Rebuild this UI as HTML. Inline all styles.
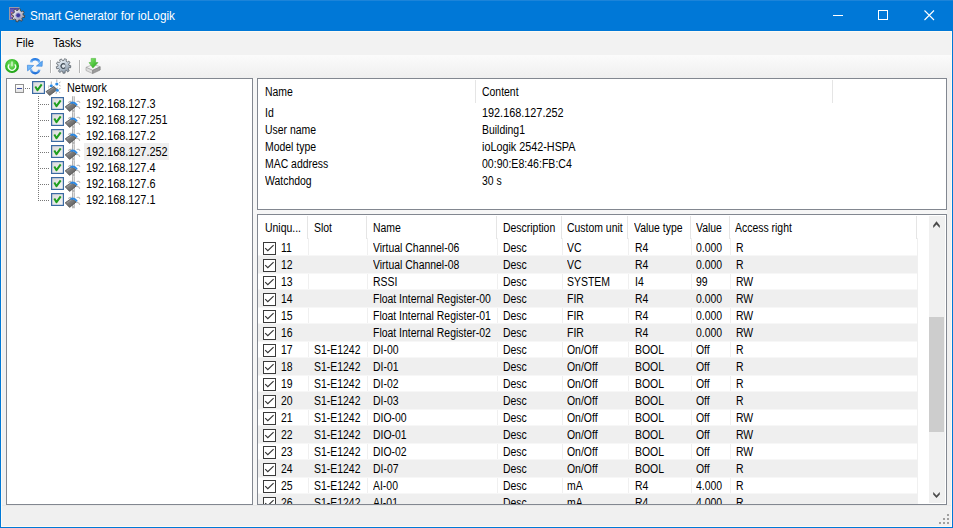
<!DOCTYPE html>
<html><head><meta charset="utf-8"><style>
*{margin:0;padding:0;box-sizing:border-box}
html,body{width:953px;height:528px;overflow:hidden;background:#0078d7;font-family:"Liberation Sans",sans-serif;position:relative}
div{position:absolute}
.t{white-space:pre;color:#000;line-height:13px;transform-origin:0 0}
.lt{font-size:12px;transform:scaleX(.87)}
.tt{font-size:12px;transform:scaleX(.905)}
#topline{left:0;top:0;width:953px;height:1px;background:#1c84d9}
#title{left:30px;top:9px;font-size:12.3px;color:#fff;line-height:15px;white-space:pre;transform:scaleX(.955);transform-origin:0 0}
#client{left:1px;top:31px;width:951px;height:496px;background:#f0f0f0;border:1px solid #fdfaf3}
#menu{left:0;top:0}
.menuitem{font-size:12.2px;white-space:pre;line-height:14px;transform:scaleX(.91);transform-origin:0 0}
#toolbar{left:1px;top:55px;width:950px;height:23px;background:linear-gradient(#fbfbfb,#efefef)}
.tsep{top:60px;width:2px;height:13px;border-left:1px solid #b4b4b4;border-right:1px solid #fff}
.panel{background:#fff;border:1px solid #828790}
.hsep{top:216px;width:1px;height:23px;background:#e5e5e5}
.hsep2{top:80px;width:1px;height:23px;background:#e5e5e5}
.grow{left:258px;width:659px;height:19px;background:#efefef;border-top:1px solid #f7f7f7;border-bottom:1px solid #f7f7f7}
.cb{position:absolute}
.tcb{width:13px;height:13px;border:1px solid #3c6aa5;background:linear-gradient(135deg,#e0e0e0,#f8f8f8)}
.tcb svg{position:absolute;left:0;top:0}
.sel{left:84px;width:85px;height:17px;background:#efefef}
.hdots{height:1px;background:repeating-linear-gradient(90deg,#777 0 1px,transparent 1px 2px)}
.vdots{width:1px;background:repeating-linear-gradient(180deg,#777 0 1px,transparent 1px 2px)}
.nic{width:16px;height:16px}
#sb{left:929px;top:216px;width:16px;height:287px;background:#f0f0f0}
#thumb{left:929px;top:317px;width:15px;height:115px;background:#cdcdcd}
</style></head><body>
<div id="topline"></div>
<svg style="position:absolute;left:8px;top:6px" width="19" height="18" viewBox="0 0 19 18"><defs><linearGradient id="ag" x1="0" y1="0" x2="1" y2="1"><stop offset="0" stop-color="#f4f4fa"/><stop offset="0.5" stop-color="#c8cad8"/><stop offset="1" stop-color="#70768e"/></linearGradient></defs><rect x="1.5" y="1.5" width="9.5" height="12" fill="#6a5ec0" stroke="#9a98a8" stroke-width="1"/><rect x="2" y="2" width="8.5" height="1.3" fill="#4a4aa8"/><circle cx="4" cy="7" r="1" fill="#f07a80"/><circle cx="4" cy="10" r="1" fill="#e8a0a0"/><polygon points="15.20,9.12 16.79,9.58 16.38,11.61 14.73,11.41 13.86,12.71 14.66,14.16 12.94,15.30 11.91,14.00 10.38,14.30 9.92,15.89 7.89,15.48 8.09,13.83 6.79,12.96 5.34,13.76 4.20,12.04 5.50,11.01 5.20,9.48 3.61,9.02 4.02,6.99 5.67,7.19 6.54,5.89 5.74,4.44 7.46,3.30 8.49,4.60 10.02,4.30 10.48,2.71 12.51,3.12 12.31,4.77 13.61,5.64 15.06,4.84 16.20,6.56 14.90,7.59" fill="url(#ag)" stroke="#3a3a3a" stroke-width="0.8"/><circle cx="10.2" cy="9.3" r="2.4" fill="#3e3aa0" stroke="#a0a0d0" stroke-width="0.8"/></svg>
<div id="title">Smart Generator for ioLogik</div>
<svg style="position:absolute;left:833px;top:15px" width="10" height="1"><rect width="10" height="1" fill="#fff"/></svg>
<svg style="position:absolute;left:878px;top:10px" width="10" height="10"><rect x="0.5" y="0.5" width="9" height="9" fill="none" stroke="#fff"/></svg>
<svg style="position:absolute;left:924px;top:10px" width="11" height="11"><path d="M0.5 0.5 L10 10 M10 0.5 L0.5 10" stroke="#fff" stroke-width="1.1"/></svg>
<div id="client"></div>
<div style="left:2px;top:32px;width:949px;height:23px;background:#f2f2f2"></div>
<div class="t menuitem" style="left:16px;top:36px">File</div>
<div class="t menuitem" style="left:53px;top:36px">Tasks</div>
<div id="toolbar"></div>
<!-- toolbar icons -->
<svg style="position:absolute;left:5px;top:59px" width="14" height="14" viewBox="0 0 14 14"><defs><radialGradient id="gp" cx="45%" cy="40%" r="60%"><stop offset="0" stop-color="#8ce878"/><stop offset="0.65" stop-color="#3cbf2e"/><stop offset="1" stop-color="#199c12"/></radialGradient></defs><circle cx="7" cy="7" r="7" fill="url(#gp)"/><path d="M4.2 5.3 A3.6 3.6 0 1 0 9.8 5.3" stroke="#f2fff0" stroke-width="1.35" fill="none"/><path d="M7 2.6 V7.2" stroke="#d8f5d0" stroke-width="1.4"/></svg>
<svg style="position:absolute;left:24px;top:55px" width="24" height="22" viewBox="0 0 24 22"><defs><linearGradient id="gr" x1="0" y1="0" x2="0" y2="1"><stop offset="0" stop-color="#2a7ee4"/><stop offset="1" stop-color="#a6d6ff"/></linearGradient><linearGradient id="gr2" x1="0" y1="1" x2="0" y2="0"><stop offset="0" stop-color="#1f70d8"/><stop offset="1" stop-color="#9ccfff"/></linearGradient></defs><path d="M7.05 7.5 A4.3 4.3 0 0 1 15.5 8.2" stroke="url(#gr)" stroke-width="2.5" fill="none"/><polygon points="18.4,6 18.1,11.3 12.4,11.1" fill="#62acf6" stroke="#2f7ed8" stroke-width="0.6" stroke-linejoin="round"/><path d="M15.35 14.6 A4.2 4.2 0 0 1 7.0 13.2" stroke="url(#gr2)" stroke-width="2.5" fill="none"/><polygon points="3.4,10.2 9.7,10.5 3.6,15.9" fill="#72b8fa" stroke="#2f7ed8" stroke-width="0.6" stroke-linejoin="round"/></svg>
<div class="tsep" style="left:50px"></div>
<svg style="position:absolute;left:52px;top:55px" width="24" height="22" viewBox="0 0 24 22"><defs><linearGradient id="gg" x1="0.2" y1="0" x2="0.8" y2="1"><stop offset="0" stop-color="#f8fbfd"/><stop offset="0.45" stop-color="#c4d0dc"/><stop offset="1" stop-color="#7c8c9c"/></linearGradient></defs><polygon points="16.97,10.40 18.79,10.66 18.58,12.78 16.74,12.67 16.07,14.05 17.30,15.43 15.78,16.92 14.44,15.65 13.04,16.28 13.10,18.12 10.97,18.28 10.76,16.45 9.29,16.04 8.15,17.49 6.42,16.24 7.43,14.70 6.57,13.43 4.76,13.81 4.24,11.75 6.00,11.22 6.16,9.69 4.53,8.83 5.46,6.90 7.15,7.63 8.25,6.57 7.56,4.85 9.50,3.98 10.33,5.63 11.86,5.51 12.43,3.76 14.48,4.34 14.06,6.13 15.30,7.03 16.87,6.05 18.07,7.81 16.59,8.92" fill="url(#gg)" stroke="#5a626a" stroke-width="0.8"/><circle cx="11.5" cy="11" r="2.3" fill="#dde4ea" stroke="#8e9aa6" stroke-width="0.9"/><path d="M12.8 9.3 A2.3 2.3 0 1 0 13.1 12.6" stroke="#46505a" stroke-width="1.1" fill="none"/></svg>
<div class="tsep" style="left:79px"></div>
<svg style="position:absolute;left:82px;top:55px" width="24" height="22" viewBox="0 0 24 22"><defs><linearGradient id="dg" x1="0" y1="0" x2="1" y2="1"><stop offset="0" stop-color="#8af070"/><stop offset="1" stop-color="#22a016"/></linearGradient></defs><polygon points="4,12.3 11.5,9.3 18.2,11.8 10.6,15.3" fill="#f2f2f2" stroke="#9a9a9a" stroke-width="0.6"/><polygon points="4,12.3 10.6,15.3 10.6,18.6 4,15.5" fill="#dedede" stroke="#9a9a9a" stroke-width="0.6"/><polygon points="10.6,15.3 18.2,11.8 18.2,15 10.6,18.6" fill="#9c9c9c" stroke="#7a7a7a" stroke-width="0.6"/><polygon points="9.2,3.4 13.6,3.4 13.6,7.4 16,7.6 10.9,13 7,7.6 9.2,7.4" fill="url(#dg)" stroke="#3aa82a" stroke-width="0.5"/></svg>

<div style="left:253px;top:78px;width:4px;height:427px;background:#f6f6f6"></div>
<div style="left:257px;top:210px;width:690px;height:4px;background:#f6f6f6"></div>
<!-- tree panel -->
<div class="panel" style="left:6px;top:78px;width:247px;height:427px"></div>
<div style="left:15px;top:84px;width:9px;height:9px;border:1px solid #919191;background:linear-gradient(#fff,#e4e4e4)"></div>
<div style="left:17px;top:88px;width:5px;height:1px;background:#3c4ea0"></div>
<div class="hdots" style="left:25px;top:88px;width:6px"></div>
<svg class="cb" style="left:32px;top:81px" width="13" height="13"><defs><linearGradient id="tg" x1="0" y1="0" x2="1" y2="1"><stop offset="0" stop-color="#d8d8d8"/><stop offset="1" stop-color="#f8f8f8"/></linearGradient></defs><rect x="0.6" y="0.6" width="11.8" height="11.8" fill="url(#tg)" stroke="#3a6aa3" stroke-width="1.2"/><path d="M3.3 5.6 L5.5 9.2 L9.7 3.4" stroke="#1f9e1f" stroke-width="2" fill="none" stroke-linejoin="round"/></svg>
<svg style="position:absolute;left:45px;top:79px" width="18" height="18" viewBox="0 0 18 18"><path d="M6.3 2.5 V5 M11.8 0.5 V3 M12.3 8.5 V9.5 M3 7 L4.8 7.3 M8 8 L9.5 7 M14 4 L15.5 3 M14 6 L15.5 7 M14 10 L15.5 9.5 M14 12.5 L15 14 M11.5 13 L11 15 M3 9 L4 8.5" stroke="#a8a8a8" stroke-width="0.9" fill="none"/><polygon points="1,12.6 8.6,7.6 12.4,10.6 4.6,16.4" fill="url(#bg2)" stroke="#505050" stroke-width="0.8" stroke-linejoin="round"/><path d="M2.4 12.8 L8.6 8.8" stroke="#9a9a9a" stroke-width="0.8"/><circle cx="6.3" cy="6.8" r="1.5" fill="#2a8ae6"/><circle cx="11.8" cy="5" r="1.6" fill="#2a8ae6"/><circle cx="12.3" cy="11.3" r="1.5" fill="#2a8ae6"/></svg>
<div class="t tt" style="left:67px;top:82px">Network</div>
<div class="vdots" style="left:38px;top:96px;height:105px"></div>
<div class="hdots" style="left:40px;top:104px;width:10px"></div>
<svg class="cb" style="left:51px;top:97px" width="13" height="13"><defs><linearGradient id="tg" x1="0" y1="0" x2="1" y2="1"><stop offset="0" stop-color="#d8d8d8"/><stop offset="1" stop-color="#f8f8f8"/></linearGradient></defs><rect x="0.6" y="0.6" width="11.8" height="11.8" fill="url(#tg)" stroke="#3a6aa3" stroke-width="1.2"/><path d="M3.3 5.6 L5.5 9.2 L9.7 3.4" stroke="#1f9e1f" stroke-width="2" fill="none" stroke-linejoin="round"/></svg>
<div class="nic" style="left:65px;top:96px;height:18px"><svg width="16" height="18" viewBox="0 0 16 18"><defs><linearGradient id="cg" x1="0" y1="0" x2="1" y2="0"><stop offset="0" stop-color="#979797"/><stop offset="0.5" stop-color="#e4e4e4"/><stop offset="1" stop-color="#aaaaaa"/></linearGradient><linearGradient id="bg2" x1="0" y1="0" x2="1" y2="1"><stop offset="0" stop-color="#9a9a9a"/><stop offset="1" stop-color="#545454"/></linearGradient></defs><rect x="7" y="0" width="2.9" height="16.5" rx="1" fill="url(#cg)"/><path d="M3.4 6.8 Q4.4 5 6.4 5.4 M11.6 5.6 Q14 4.4 15 6.8 M11.4 10.6 Q14.2 10 14.8 12.8 M8.4 14.2 L8.8 16" stroke="#b4b4b4" stroke-width="1.1" fill="none"/><polygon points="0.2,10.8 6.4,6.4 11.2,10 4.6,15.4" fill="url(#bg2)" stroke="#505050" stroke-width="0.8" stroke-linejoin="round"/><path d="M2 10.8 L6.6 7.8" stroke="#9a9a9a" stroke-width="0.8"/><path d="M6.3 6.8 Q9.2 5.6 11.6 8.8" stroke="#2a88e4" stroke-width="1.9" fill="none" stroke-linecap="round"/></svg></div>
<div class="t tt" style="left:86px;top:98px">192.168.127.3</div>
<div class="hdots" style="left:40px;top:120px;width:10px"></div>
<svg class="cb" style="left:51px;top:113px" width="13" height="13"><defs><linearGradient id="tg" x1="0" y1="0" x2="1" y2="1"><stop offset="0" stop-color="#d8d8d8"/><stop offset="1" stop-color="#f8f8f8"/></linearGradient></defs><rect x="0.6" y="0.6" width="11.8" height="11.8" fill="url(#tg)" stroke="#3a6aa3" stroke-width="1.2"/><path d="M3.3 5.6 L5.5 9.2 L9.7 3.4" stroke="#1f9e1f" stroke-width="2" fill="none" stroke-linejoin="round"/></svg>
<div class="nic" style="left:65px;top:112px;height:18px"><svg width="16" height="18" viewBox="0 0 16 18"><defs><linearGradient id="cg" x1="0" y1="0" x2="1" y2="0"><stop offset="0" stop-color="#979797"/><stop offset="0.5" stop-color="#e4e4e4"/><stop offset="1" stop-color="#aaaaaa"/></linearGradient><linearGradient id="bg2" x1="0" y1="0" x2="1" y2="1"><stop offset="0" stop-color="#9a9a9a"/><stop offset="1" stop-color="#545454"/></linearGradient></defs><rect x="7" y="0" width="2.9" height="16.5" rx="1" fill="url(#cg)"/><path d="M3.4 6.8 Q4.4 5 6.4 5.4 M11.6 5.6 Q14 4.4 15 6.8 M11.4 10.6 Q14.2 10 14.8 12.8 M8.4 14.2 L8.8 16" stroke="#b4b4b4" stroke-width="1.1" fill="none"/><polygon points="0.2,10.8 6.4,6.4 11.2,10 4.6,15.4" fill="url(#bg2)" stroke="#505050" stroke-width="0.8" stroke-linejoin="round"/><path d="M2 10.8 L6.6 7.8" stroke="#9a9a9a" stroke-width="0.8"/><path d="M6.3 6.8 Q9.2 5.6 11.6 8.8" stroke="#2a88e4" stroke-width="1.9" fill="none" stroke-linecap="round"/></svg></div>
<div class="t tt" style="left:86px;top:114px">192.168.127.251</div>
<div class="hdots" style="left:40px;top:136px;width:10px"></div>
<svg class="cb" style="left:51px;top:129px" width="13" height="13"><defs><linearGradient id="tg" x1="0" y1="0" x2="1" y2="1"><stop offset="0" stop-color="#d8d8d8"/><stop offset="1" stop-color="#f8f8f8"/></linearGradient></defs><rect x="0.6" y="0.6" width="11.8" height="11.8" fill="url(#tg)" stroke="#3a6aa3" stroke-width="1.2"/><path d="M3.3 5.6 L5.5 9.2 L9.7 3.4" stroke="#1f9e1f" stroke-width="2" fill="none" stroke-linejoin="round"/></svg>
<div class="nic" style="left:65px;top:128px;height:18px"><svg width="16" height="18" viewBox="0 0 16 18"><defs><linearGradient id="cg" x1="0" y1="0" x2="1" y2="0"><stop offset="0" stop-color="#979797"/><stop offset="0.5" stop-color="#e4e4e4"/><stop offset="1" stop-color="#aaaaaa"/></linearGradient><linearGradient id="bg2" x1="0" y1="0" x2="1" y2="1"><stop offset="0" stop-color="#9a9a9a"/><stop offset="1" stop-color="#545454"/></linearGradient></defs><rect x="7" y="0" width="2.9" height="16.5" rx="1" fill="url(#cg)"/><path d="M3.4 6.8 Q4.4 5 6.4 5.4 M11.6 5.6 Q14 4.4 15 6.8 M11.4 10.6 Q14.2 10 14.8 12.8 M8.4 14.2 L8.8 16" stroke="#b4b4b4" stroke-width="1.1" fill="none"/><polygon points="0.2,10.8 6.4,6.4 11.2,10 4.6,15.4" fill="url(#bg2)" stroke="#505050" stroke-width="0.8" stroke-linejoin="round"/><path d="M2 10.8 L6.6 7.8" stroke="#9a9a9a" stroke-width="0.8"/><path d="M6.3 6.8 Q9.2 5.6 11.6 8.8" stroke="#2a88e4" stroke-width="1.9" fill="none" stroke-linecap="round"/></svg></div>
<div class="t tt" style="left:86px;top:130px">192.168.127.2</div>
<div class="sel" style="top:143px"></div>
<div class="hdots" style="left:40px;top:152px;width:10px"></div>
<svg class="cb" style="left:51px;top:145px" width="13" height="13"><defs><linearGradient id="tg" x1="0" y1="0" x2="1" y2="1"><stop offset="0" stop-color="#d8d8d8"/><stop offset="1" stop-color="#f8f8f8"/></linearGradient></defs><rect x="0.6" y="0.6" width="11.8" height="11.8" fill="url(#tg)" stroke="#3a6aa3" stroke-width="1.2"/><path d="M3.3 5.6 L5.5 9.2 L9.7 3.4" stroke="#1f9e1f" stroke-width="2" fill="none" stroke-linejoin="round"/></svg>
<div class="nic" style="left:65px;top:144px;height:18px"><svg width="16" height="18" viewBox="0 0 16 18"><defs><linearGradient id="cg" x1="0" y1="0" x2="1" y2="0"><stop offset="0" stop-color="#979797"/><stop offset="0.5" stop-color="#e4e4e4"/><stop offset="1" stop-color="#aaaaaa"/></linearGradient><linearGradient id="bg2" x1="0" y1="0" x2="1" y2="1"><stop offset="0" stop-color="#9a9a9a"/><stop offset="1" stop-color="#545454"/></linearGradient></defs><rect x="7" y="0" width="2.9" height="16.5" rx="1" fill="url(#cg)"/><path d="M3.4 6.8 Q4.4 5 6.4 5.4 M11.6 5.6 Q14 4.4 15 6.8 M11.4 10.6 Q14.2 10 14.8 12.8 M8.4 14.2 L8.8 16" stroke="#b4b4b4" stroke-width="1.1" fill="none"/><polygon points="0.2,10.8 6.4,6.4 11.2,10 4.6,15.4" fill="url(#bg2)" stroke="#505050" stroke-width="0.8" stroke-linejoin="round"/><path d="M2 10.8 L6.6 7.8" stroke="#9a9a9a" stroke-width="0.8"/><path d="M6.3 6.8 Q9.2 5.6 11.6 8.8" stroke="#2a88e4" stroke-width="1.9" fill="none" stroke-linecap="round"/></svg></div>
<div class="t tt" style="left:86px;top:146px">192.168.127.252</div>
<div class="hdots" style="left:40px;top:168px;width:10px"></div>
<svg class="cb" style="left:51px;top:161px" width="13" height="13"><defs><linearGradient id="tg" x1="0" y1="0" x2="1" y2="1"><stop offset="0" stop-color="#d8d8d8"/><stop offset="1" stop-color="#f8f8f8"/></linearGradient></defs><rect x="0.6" y="0.6" width="11.8" height="11.8" fill="url(#tg)" stroke="#3a6aa3" stroke-width="1.2"/><path d="M3.3 5.6 L5.5 9.2 L9.7 3.4" stroke="#1f9e1f" stroke-width="2" fill="none" stroke-linejoin="round"/></svg>
<div class="nic" style="left:65px;top:160px;height:18px"><svg width="16" height="18" viewBox="0 0 16 18"><defs><linearGradient id="cg" x1="0" y1="0" x2="1" y2="0"><stop offset="0" stop-color="#979797"/><stop offset="0.5" stop-color="#e4e4e4"/><stop offset="1" stop-color="#aaaaaa"/></linearGradient><linearGradient id="bg2" x1="0" y1="0" x2="1" y2="1"><stop offset="0" stop-color="#9a9a9a"/><stop offset="1" stop-color="#545454"/></linearGradient></defs><rect x="7" y="0" width="2.9" height="16.5" rx="1" fill="url(#cg)"/><path d="M3.4 6.8 Q4.4 5 6.4 5.4 M11.6 5.6 Q14 4.4 15 6.8 M11.4 10.6 Q14.2 10 14.8 12.8 M8.4 14.2 L8.8 16" stroke="#b4b4b4" stroke-width="1.1" fill="none"/><polygon points="0.2,10.8 6.4,6.4 11.2,10 4.6,15.4" fill="url(#bg2)" stroke="#505050" stroke-width="0.8" stroke-linejoin="round"/><path d="M2 10.8 L6.6 7.8" stroke="#9a9a9a" stroke-width="0.8"/><path d="M6.3 6.8 Q9.2 5.6 11.6 8.8" stroke="#2a88e4" stroke-width="1.9" fill="none" stroke-linecap="round"/></svg></div>
<div class="t tt" style="left:86px;top:162px">192.168.127.4</div>
<div class="hdots" style="left:40px;top:184px;width:10px"></div>
<svg class="cb" style="left:51px;top:177px" width="13" height="13"><defs><linearGradient id="tg" x1="0" y1="0" x2="1" y2="1"><stop offset="0" stop-color="#d8d8d8"/><stop offset="1" stop-color="#f8f8f8"/></linearGradient></defs><rect x="0.6" y="0.6" width="11.8" height="11.8" fill="url(#tg)" stroke="#3a6aa3" stroke-width="1.2"/><path d="M3.3 5.6 L5.5 9.2 L9.7 3.4" stroke="#1f9e1f" stroke-width="2" fill="none" stroke-linejoin="round"/></svg>
<div class="nic" style="left:65px;top:176px;height:18px"><svg width="16" height="18" viewBox="0 0 16 18"><defs><linearGradient id="cg" x1="0" y1="0" x2="1" y2="0"><stop offset="0" stop-color="#979797"/><stop offset="0.5" stop-color="#e4e4e4"/><stop offset="1" stop-color="#aaaaaa"/></linearGradient><linearGradient id="bg2" x1="0" y1="0" x2="1" y2="1"><stop offset="0" stop-color="#9a9a9a"/><stop offset="1" stop-color="#545454"/></linearGradient></defs><rect x="7" y="0" width="2.9" height="16.5" rx="1" fill="url(#cg)"/><path d="M3.4 6.8 Q4.4 5 6.4 5.4 M11.6 5.6 Q14 4.4 15 6.8 M11.4 10.6 Q14.2 10 14.8 12.8 M8.4 14.2 L8.8 16" stroke="#b4b4b4" stroke-width="1.1" fill="none"/><polygon points="0.2,10.8 6.4,6.4 11.2,10 4.6,15.4" fill="url(#bg2)" stroke="#505050" stroke-width="0.8" stroke-linejoin="round"/><path d="M2 10.8 L6.6 7.8" stroke="#9a9a9a" stroke-width="0.8"/><path d="M6.3 6.8 Q9.2 5.6 11.6 8.8" stroke="#2a88e4" stroke-width="1.9" fill="none" stroke-linecap="round"/></svg></div>
<div class="t tt" style="left:86px;top:178px">192.168.127.6</div>
<div class="hdots" style="left:40px;top:200px;width:10px"></div>
<svg class="cb" style="left:51px;top:193px" width="13" height="13"><defs><linearGradient id="tg" x1="0" y1="0" x2="1" y2="1"><stop offset="0" stop-color="#d8d8d8"/><stop offset="1" stop-color="#f8f8f8"/></linearGradient></defs><rect x="0.6" y="0.6" width="11.8" height="11.8" fill="url(#tg)" stroke="#3a6aa3" stroke-width="1.2"/><path d="M3.3 5.6 L5.5 9.2 L9.7 3.4" stroke="#1f9e1f" stroke-width="2" fill="none" stroke-linejoin="round"/></svg>
<div class="nic" style="left:65px;top:192px;height:18px"><svg width="16" height="18" viewBox="0 0 16 18"><defs><linearGradient id="cg" x1="0" y1="0" x2="1" y2="0"><stop offset="0" stop-color="#979797"/><stop offset="0.5" stop-color="#e4e4e4"/><stop offset="1" stop-color="#aaaaaa"/></linearGradient><linearGradient id="bg2" x1="0" y1="0" x2="1" y2="1"><stop offset="0" stop-color="#9a9a9a"/><stop offset="1" stop-color="#545454"/></linearGradient></defs><rect x="7" y="0" width="2.9" height="16.5" rx="1" fill="url(#cg)"/><path d="M3.4 6.8 Q4.4 5 6.4 5.4 M11.6 5.6 Q14 4.4 15 6.8 M11.4 10.6 Q14.2 10 14.8 12.8 M8.4 14.2 L8.8 16" stroke="#b4b4b4" stroke-width="1.1" fill="none"/><polygon points="0.2,10.8 6.4,6.4 11.2,10 4.6,15.4" fill="url(#bg2)" stroke="#505050" stroke-width="0.8" stroke-linejoin="round"/><path d="M2 10.8 L6.6 7.8" stroke="#9a9a9a" stroke-width="0.8"/><path d="M6.3 6.8 Q9.2 5.6 11.6 8.8" stroke="#2a88e4" stroke-width="1.9" fill="none" stroke-linecap="round"/></svg></div>
<div class="t tt" style="left:86px;top:194px">192.168.127.1</div>

<!-- info panel -->
<div class="panel" style="left:257px;top:78px;width:690px;height:132px"></div>
<div class="t lt" style="left:265px;top:86px">Name</div>
<div class="t lt" style="left:482px;top:86px">Content</div>
<div class="hsep2" style="left:475px"></div>
<div class="hsep2" style="left:832px"></div>
<div class="t lt" style="left:265px;top:107px">Id</div>
<div class="t lt" style="left:482px;top:107px;transform:scaleX(0.905)">192.168.127.252</div>
<div class="t lt" style="left:265px;top:124px">User name</div>
<div class="t lt" style="left:482px;top:124px">Building1</div>
<div class="t lt" style="left:265px;top:141px">Model type</div>
<div class="t lt" style="left:482px;top:141px;transform:scaleX(0.9)">ioLogik 2542-HSPA</div>
<div class="t lt" style="left:265px;top:158px">MAC address</div>
<div class="t lt" style="left:482px;top:158px;transform:scaleX(0.88)">00:90:E8:46:FB:C4</div>
<div class="t lt" style="left:265px;top:175px">Watchdog</div>
<div class="t lt" style="left:482px;top:175px">30 s</div>

<!-- list -->
<div class="panel" style="left:257px;top:214px;width:690px;height:291px"></div>
<div style="left:258px;top:214px;width:671px;height:290px;overflow:hidden"><div style="left:-258px;top:-214px;width:953px;height:528px">
<div class="t lt" style="left:265px;top:222px">Uniqu...</div>
<div class="t lt" style="left:314px;top:222px">Slot</div>
<div class="t lt" style="left:373px;top:222px">Name</div>
<div class="t lt" style="left:503px;top:222px">Description</div>
<div class="t lt" style="left:567px;top:222px">Custom unit</div>
<div class="t lt" style="left:634px;top:222px">Value type</div>
<div class="t lt" style="left:696px;top:222px">Value</div>
<div class="t lt" style="left:735px;top:222px">Access right</div>
<div class="hsep" style="left:307px"></div>
<div class="hsep" style="left:366px"></div>
<div class="hsep" style="left:496px"></div>
<div class="hsep" style="left:561px"></div>
<div class="hsep" style="left:627px"></div>
<div class="hsep" style="left:690px"></div>
<div class="hsep" style="left:729px"></div>
<div class="hsep" style="left:916px"></div>
<div style="left:308px;top:238px;width:1px;height:266px;background:#f0f0f0"></div>
<div style="left:367px;top:238px;width:1px;height:266px;background:#f0f0f0"></div>
<div style="left:497px;top:238px;width:1px;height:266px;background:#f0f0f0"></div>
<div style="left:562px;top:238px;width:1px;height:266px;background:#f0f0f0"></div>
<div style="left:628px;top:238px;width:1px;height:266px;background:#f0f0f0"></div>
<div style="left:691px;top:238px;width:1px;height:266px;background:#f0f0f0"></div>
<div style="left:730px;top:238px;width:1px;height:266px;background:#f0f0f0"></div>
<div style="left:917px;top:238px;width:1px;height:266px;background:#f0f0f0"></div>
<svg class="cb" style="left:263px;top:242px" width="13" height="13" viewBox="0 0 13 13"><rect x="0.5" y="0.5" width="12" height="12" fill="#fff" stroke="#3a3a3a"/><path d="M2.2 6.1 L4.8 8.6 L10.6 3.1" stroke="#333" stroke-width="1.15" fill="none"/></svg>
<div class="t lt" style="left:281px;top:242px">11</div>
<div class="t lt" style="left:373px;top:242px">Virtual Channel-06</div>
<div class="t lt" style="left:503px;top:242px">Desc</div>
<div class="t lt" style="left:567px;top:242px">VC</div>
<div class="t lt" style="left:635px;top:242px">R4</div>
<div class="t lt" style="left:696px;top:242px">0.000</div>
<div class="t lt" style="left:736px;top:242px">R</div>
<div class="grow" style="top:255px"></div>
<svg class="cb" style="left:263px;top:259px" width="13" height="13" viewBox="0 0 13 13"><rect x="0.5" y="0.5" width="12" height="12" fill="#fff" stroke="#3a3a3a"/><path d="M2.2 6.1 L4.8 8.6 L10.6 3.1" stroke="#333" stroke-width="1.15" fill="none"/></svg>
<div class="t lt" style="left:281px;top:259px">12</div>
<div class="t lt" style="left:373px;top:259px">Virtual Channel-08</div>
<div class="t lt" style="left:503px;top:259px">Desc</div>
<div class="t lt" style="left:567px;top:259px">VC</div>
<div class="t lt" style="left:635px;top:259px">R4</div>
<div class="t lt" style="left:696px;top:259px">0.000</div>
<div class="t lt" style="left:736px;top:259px">R</div>
<svg class="cb" style="left:263px;top:276px" width="13" height="13" viewBox="0 0 13 13"><rect x="0.5" y="0.5" width="12" height="12" fill="#fff" stroke="#3a3a3a"/><path d="M2.2 6.1 L4.8 8.6 L10.6 3.1" stroke="#333" stroke-width="1.15" fill="none"/></svg>
<div class="t lt" style="left:281px;top:276px">13</div>
<div class="t lt" style="left:373px;top:276px">RSSI</div>
<div class="t lt" style="left:503px;top:276px">Desc</div>
<div class="t lt" style="left:567px;top:276px">SYSTEM</div>
<div class="t lt" style="left:635px;top:276px">I4</div>
<div class="t lt" style="left:696px;top:276px">99</div>
<div class="t lt" style="left:736px;top:276px">RW</div>
<div class="grow" style="top:289px"></div>
<svg class="cb" style="left:263px;top:293px" width="13" height="13" viewBox="0 0 13 13"><rect x="0.5" y="0.5" width="12" height="12" fill="#fff" stroke="#3a3a3a"/><path d="M2.2 6.1 L4.8 8.6 L10.6 3.1" stroke="#333" stroke-width="1.15" fill="none"/></svg>
<div class="t lt" style="left:281px;top:293px">14</div>
<div class="t lt" style="left:373px;top:293px">Float Internal Register-00</div>
<div class="t lt" style="left:503px;top:293px">Desc</div>
<div class="t lt" style="left:567px;top:293px">FIR</div>
<div class="t lt" style="left:635px;top:293px">R4</div>
<div class="t lt" style="left:696px;top:293px">0.000</div>
<div class="t lt" style="left:736px;top:293px">RW</div>
<svg class="cb" style="left:263px;top:310px" width="13" height="13" viewBox="0 0 13 13"><rect x="0.5" y="0.5" width="12" height="12" fill="#fff" stroke="#3a3a3a"/><path d="M2.2 6.1 L4.8 8.6 L10.6 3.1" stroke="#333" stroke-width="1.15" fill="none"/></svg>
<div class="t lt" style="left:281px;top:310px">15</div>
<div class="t lt" style="left:373px;top:310px">Float Internal Register-01</div>
<div class="t lt" style="left:503px;top:310px">Desc</div>
<div class="t lt" style="left:567px;top:310px">FIR</div>
<div class="t lt" style="left:635px;top:310px">R4</div>
<div class="t lt" style="left:696px;top:310px">0.000</div>
<div class="t lt" style="left:736px;top:310px">RW</div>
<div class="grow" style="top:323px"></div>
<svg class="cb" style="left:263px;top:327px" width="13" height="13" viewBox="0 0 13 13"><rect x="0.5" y="0.5" width="12" height="12" fill="#fff" stroke="#3a3a3a"/><path d="M2.2 6.1 L4.8 8.6 L10.6 3.1" stroke="#333" stroke-width="1.15" fill="none"/></svg>
<div class="t lt" style="left:281px;top:327px">16</div>
<div class="t lt" style="left:373px;top:327px">Float Internal Register-02</div>
<div class="t lt" style="left:503px;top:327px">Desc</div>
<div class="t lt" style="left:567px;top:327px">FIR</div>
<div class="t lt" style="left:635px;top:327px">R4</div>
<div class="t lt" style="left:696px;top:327px">0.000</div>
<div class="t lt" style="left:736px;top:327px">RW</div>
<svg class="cb" style="left:263px;top:344px" width="13" height="13" viewBox="0 0 13 13"><rect x="0.5" y="0.5" width="12" height="12" fill="#fff" stroke="#3a3a3a"/><path d="M2.2 6.1 L4.8 8.6 L10.6 3.1" stroke="#333" stroke-width="1.15" fill="none"/></svg>
<div class="t lt" style="left:281px;top:344px">17</div>
<div class="t lt" style="left:314px;top:344px">S1-E1242</div>
<div class="t lt" style="left:373px;top:344px">DI-00</div>
<div class="t lt" style="left:503px;top:344px">Desc</div>
<div class="t lt" style="left:567px;top:344px">On/Off</div>
<div class="t lt" style="left:635px;top:344px">BOOL</div>
<div class="t lt" style="left:696px;top:344px">Off</div>
<div class="t lt" style="left:736px;top:344px">R</div>
<div class="grow" style="top:357px"></div>
<svg class="cb" style="left:263px;top:361px" width="13" height="13" viewBox="0 0 13 13"><rect x="0.5" y="0.5" width="12" height="12" fill="#fff" stroke="#3a3a3a"/><path d="M2.2 6.1 L4.8 8.6 L10.6 3.1" stroke="#333" stroke-width="1.15" fill="none"/></svg>
<div class="t lt" style="left:281px;top:361px">18</div>
<div class="t lt" style="left:314px;top:361px">S1-E1242</div>
<div class="t lt" style="left:373px;top:361px">DI-01</div>
<div class="t lt" style="left:503px;top:361px">Desc</div>
<div class="t lt" style="left:567px;top:361px">On/Off</div>
<div class="t lt" style="left:635px;top:361px">BOOL</div>
<div class="t lt" style="left:696px;top:361px">Off</div>
<div class="t lt" style="left:736px;top:361px">R</div>
<svg class="cb" style="left:263px;top:378px" width="13" height="13" viewBox="0 0 13 13"><rect x="0.5" y="0.5" width="12" height="12" fill="#fff" stroke="#3a3a3a"/><path d="M2.2 6.1 L4.8 8.6 L10.6 3.1" stroke="#333" stroke-width="1.15" fill="none"/></svg>
<div class="t lt" style="left:281px;top:378px">19</div>
<div class="t lt" style="left:314px;top:378px">S1-E1242</div>
<div class="t lt" style="left:373px;top:378px">DI-02</div>
<div class="t lt" style="left:503px;top:378px">Desc</div>
<div class="t lt" style="left:567px;top:378px">On/Off</div>
<div class="t lt" style="left:635px;top:378px">BOOL</div>
<div class="t lt" style="left:696px;top:378px">Off</div>
<div class="t lt" style="left:736px;top:378px">R</div>
<div class="grow" style="top:391px"></div>
<svg class="cb" style="left:263px;top:395px" width="13" height="13" viewBox="0 0 13 13"><rect x="0.5" y="0.5" width="12" height="12" fill="#fff" stroke="#3a3a3a"/><path d="M2.2 6.1 L4.8 8.6 L10.6 3.1" stroke="#333" stroke-width="1.15" fill="none"/></svg>
<div class="t lt" style="left:281px;top:395px">20</div>
<div class="t lt" style="left:314px;top:395px">S1-E1242</div>
<div class="t lt" style="left:373px;top:395px">DI-03</div>
<div class="t lt" style="left:503px;top:395px">Desc</div>
<div class="t lt" style="left:567px;top:395px">On/Off</div>
<div class="t lt" style="left:635px;top:395px">BOOL</div>
<div class="t lt" style="left:696px;top:395px">Off</div>
<div class="t lt" style="left:736px;top:395px">R</div>
<svg class="cb" style="left:263px;top:412px" width="13" height="13" viewBox="0 0 13 13"><rect x="0.5" y="0.5" width="12" height="12" fill="#fff" stroke="#3a3a3a"/><path d="M2.2 6.1 L4.8 8.6 L10.6 3.1" stroke="#333" stroke-width="1.15" fill="none"/></svg>
<div class="t lt" style="left:281px;top:412px">21</div>
<div class="t lt" style="left:314px;top:412px">S1-E1242</div>
<div class="t lt" style="left:373px;top:412px">DIO-00</div>
<div class="t lt" style="left:503px;top:412px">Desc</div>
<div class="t lt" style="left:567px;top:412px">On/Off</div>
<div class="t lt" style="left:635px;top:412px">BOOL</div>
<div class="t lt" style="left:696px;top:412px">Off</div>
<div class="t lt" style="left:736px;top:412px">RW</div>
<div class="grow" style="top:425px"></div>
<svg class="cb" style="left:263px;top:429px" width="13" height="13" viewBox="0 0 13 13"><rect x="0.5" y="0.5" width="12" height="12" fill="#fff" stroke="#3a3a3a"/><path d="M2.2 6.1 L4.8 8.6 L10.6 3.1" stroke="#333" stroke-width="1.15" fill="none"/></svg>
<div class="t lt" style="left:281px;top:429px">22</div>
<div class="t lt" style="left:314px;top:429px">S1-E1242</div>
<div class="t lt" style="left:373px;top:429px">DIO-01</div>
<div class="t lt" style="left:503px;top:429px">Desc</div>
<div class="t lt" style="left:567px;top:429px">On/Off</div>
<div class="t lt" style="left:635px;top:429px">BOOL</div>
<div class="t lt" style="left:696px;top:429px">Off</div>
<div class="t lt" style="left:736px;top:429px">RW</div>
<svg class="cb" style="left:263px;top:446px" width="13" height="13" viewBox="0 0 13 13"><rect x="0.5" y="0.5" width="12" height="12" fill="#fff" stroke="#3a3a3a"/><path d="M2.2 6.1 L4.8 8.6 L10.6 3.1" stroke="#333" stroke-width="1.15" fill="none"/></svg>
<div class="t lt" style="left:281px;top:446px">23</div>
<div class="t lt" style="left:314px;top:446px">S1-E1242</div>
<div class="t lt" style="left:373px;top:446px">DIO-02</div>
<div class="t lt" style="left:503px;top:446px">Desc</div>
<div class="t lt" style="left:567px;top:446px">On/Off</div>
<div class="t lt" style="left:635px;top:446px">BOOL</div>
<div class="t lt" style="left:696px;top:446px">Off</div>
<div class="t lt" style="left:736px;top:446px">RW</div>
<div class="grow" style="top:459px"></div>
<svg class="cb" style="left:263px;top:463px" width="13" height="13" viewBox="0 0 13 13"><rect x="0.5" y="0.5" width="12" height="12" fill="#fff" stroke="#3a3a3a"/><path d="M2.2 6.1 L4.8 8.6 L10.6 3.1" stroke="#333" stroke-width="1.15" fill="none"/></svg>
<div class="t lt" style="left:281px;top:463px">24</div>
<div class="t lt" style="left:314px;top:463px">S1-E1242</div>
<div class="t lt" style="left:373px;top:463px">DI-07</div>
<div class="t lt" style="left:503px;top:463px">Desc</div>
<div class="t lt" style="left:567px;top:463px">On/Off</div>
<div class="t lt" style="left:635px;top:463px">BOOL</div>
<div class="t lt" style="left:696px;top:463px">Off</div>
<div class="t lt" style="left:736px;top:463px">R</div>
<svg class="cb" style="left:263px;top:480px" width="13" height="13" viewBox="0 0 13 13"><rect x="0.5" y="0.5" width="12" height="12" fill="#fff" stroke="#3a3a3a"/><path d="M2.2 6.1 L4.8 8.6 L10.6 3.1" stroke="#333" stroke-width="1.15" fill="none"/></svg>
<div class="t lt" style="left:281px;top:480px">25</div>
<div class="t lt" style="left:314px;top:480px">S1-E1242</div>
<div class="t lt" style="left:373px;top:480px">AI-00</div>
<div class="t lt" style="left:503px;top:480px">Desc</div>
<div class="t lt" style="left:567px;top:480px">mA</div>
<div class="t lt" style="left:635px;top:480px">R4</div>
<div class="t lt" style="left:696px;top:480px">4.000</div>
<div class="t lt" style="left:736px;top:480px">R</div>
<div class="grow" style="top:493px"></div>
<svg class="cb" style="left:263px;top:497px" width="13" height="13" viewBox="0 0 13 13"><rect x="0.5" y="0.5" width="12" height="12" fill="#fff" stroke="#3a3a3a"/><path d="M2.2 6.1 L4.8 8.6 L10.6 3.1" stroke="#333" stroke-width="1.15" fill="none"/></svg>
<div class="t lt" style="left:281px;top:497px">26</div>
<div class="t lt" style="left:314px;top:497px">S1-E1242</div>
<div class="t lt" style="left:373px;top:497px">AI-01</div>
<div class="t lt" style="left:503px;top:497px">Desc</div>
<div class="t lt" style="left:567px;top:497px">mA</div>
<div class="t lt" style="left:635px;top:497px">R4</div>
<div class="t lt" style="left:696px;top:497px">4.000</div>
<div class="t lt" style="left:736px;top:497px">R</div>
</div></div>
<div id="sb"></div>
<div id="thumb"></div>
<svg style="position:absolute;left:932px;top:220px" width="9" height="9" viewBox="0 0 9 9"><polygon points="1.2,8 4.5,4.4 7.8,8 7.8,5.4 4.5,1.2 1.2,5.4" fill="#4a4a4a"/></svg>
<svg style="position:absolute;left:932px;top:490px" width="9" height="9" viewBox="0 0 9 9"><polygon points="1.2,2 4.5,5.6 7.8,2 7.8,4.6 4.5,8 1.2,4.6" fill="#4a4a4a"/></svg>

<!-- status grip -->
<div style="left:2px;top:505px;width:949px;height:1px;background:#e9e9e9"></div>
<svg style="position:absolute;left:938px;top:513px" width="12" height="12" viewBox="0 0 12 12"><g fill="#a0a0a0"><rect x="9" y="1" width="2" height="2"/><rect x="5" y="5" width="2" height="2"/><rect x="9" y="5" width="2" height="2"/><rect x="1" y="9" width="2" height="2"/><rect x="5" y="9" width="2" height="2"/><rect x="9" y="9" width="2" height="2"/></g></svg>
</body></html>
